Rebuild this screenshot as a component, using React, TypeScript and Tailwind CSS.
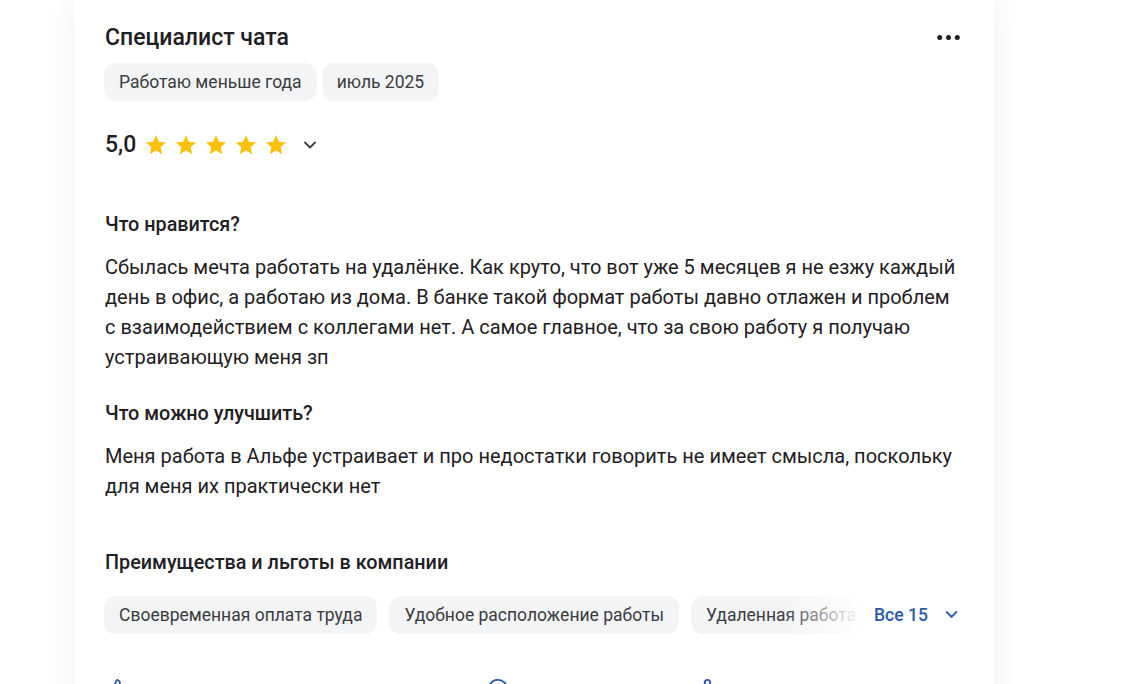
import { ChevronDown, ThumbsUp, MessageCircle, Share2 } from 'lucide-react';

function Star() {
  return (
    <svg viewBox="0 0 24 24" className="w-[24px] h-[24px]" fill="#ffc107">
      <path d="M12 2.2l2.95 6.5 7.05.75-5.3 4.75 1.5 6.95L12 17.6l-6.2 3.55 1.5-6.95L2 9.45l7.05-.75z" />
    </svg>
  );
}

function Chip({ children }: { children: React.ReactNode }) {
  return (
    <span className="shrink-0 h-[38px] flex items-center px-[15px] rounded-xl bg-[#f3f4f5] text-[17.5px] text-[#3b3c40] whitespace-nowrap">
      {children}
    </span>
  );
}

export default function App() {
  return (
    <div
      className="w-[1122px] h-[684px] overflow-hidden bg-white"
      style={{ fontFamily: 'Roboto, "Noto Sans", sans-serif' }}
    >
      <div className="ml-[74px] w-[920px] min-h-[760px] bg-white shadow-[0_0_28px_rgba(0,0,0,0.07)] pl-[30px] pr-[31px] pt-[23px] text-[#1f2023]">
        {/* Header */}
        <div className="flex items-center justify-between">
          <h2 className="ml-[1px] text-[23px] leading-[30px] font-medium">Специалист чата</h2>
          <svg viewBox="0 0 23 7" className="w-[23px] h-[7px] mr-[3px] -mt-[2px]" fill="#1f2023">
            <circle cx="2.7" cy="3.5" r="2.5" />
            <circle cx="11.5" cy="3.5" r="2.5" />
            <circle cx="20.3" cy="3.5" r="2.5" />
          </svg>
        </div>

        <div className="flex gap-[5px] mt-[10px]">
          <Chip>Работаю меньше года</Chip>
          <Chip>июль 2025</Chip>
        </div>

        {/* Rating */}
        <div className="flex items-center mt-[29px] h-[30px] ml-[1px]">
          <span className="text-[23px] font-medium mr-[8px]">5,0</span>
          <div className="flex gap-[6px]">
            <Star />
            <Star />
            <Star />
            <Star />
            <Star />
          </div>
          <ChevronDown className="w-[20px] h-[20px] ml-[12px] text-[#3b3c40]" strokeWidth={2.2} />
        </div>

        <div className="ml-[1px] -mr-[20px]">
          {/* Likes */}
          <h3 className="mt-[52px] text-[19.8px] leading-[26px] font-medium">Что нравится?</h3>
          <p className="mt-[14px] text-[20px] leading-[30px]">
            Сбылась мечта работать на удалёнке. Как круто, что вот уже 5 месяцев я не езжу каждый
            <br />
            день в офис, а работаю из дома. В банке такой формат работы давно отлажен и проблем
            <br />
            с взаимодействием с коллегами нет. А самое главное, что за свою работу я получаю
            <br />
            устраивающую меня зп
          </p>

          <h3 className="mt-[29px] text-[19.8px] leading-[26px] font-medium">Что можно улучшить?</h3>
          <p className="mt-[14px] text-[20px] leading-[30px]">
            Меня работа в Альфе устраивает и про недостатки говорить не имеет смысла, поскольку
            <br />
            для меня их практически нет
          </p>

          {/* Benefits */}
          <h3 className="mt-[49px] text-[19.8px] leading-[26px] font-medium">
            Преимущества и льготы в компании
          </h3>
        </div>
        <div className="mt-[20px] flex items-center">
          <div className="relative w-[758px] overflow-hidden flex gap-[12px]">
            <Chip>Своевременная оплата труда</Chip>
            <Chip>Удобное расположение работы</Chip>
            <Chip>Удаленная работа</Chip>
            <div className="absolute right-0 top-0 h-full w-[80px] bg-gradient-to-r from-white/0 to-white" />
          </div>
          <button className="ml-[12px] flex items-center gap-[14px] text-[17.6px] font-medium text-[#2a5ba8]">
            Все 15
            <ChevronDown className="w-[19px] h-[19px]" strokeWidth={2.6} />
          </button>
        </div>

        {/* Actions */}
        <div className="mt-[44px] flex items-center text-[#2a5ba8]">
          <ThumbsUp className="w-[22px] h-[22px] ml-[2px]" />
          <span className="ml-[359px]"><MessageCircle className="w-[22px] h-[22px]" /></span>
          <span className="ml-[182px]"><Share2 className="w-[22px] h-[22px]" /></span>
        </div>
      </div>
    </div>
  );
}
